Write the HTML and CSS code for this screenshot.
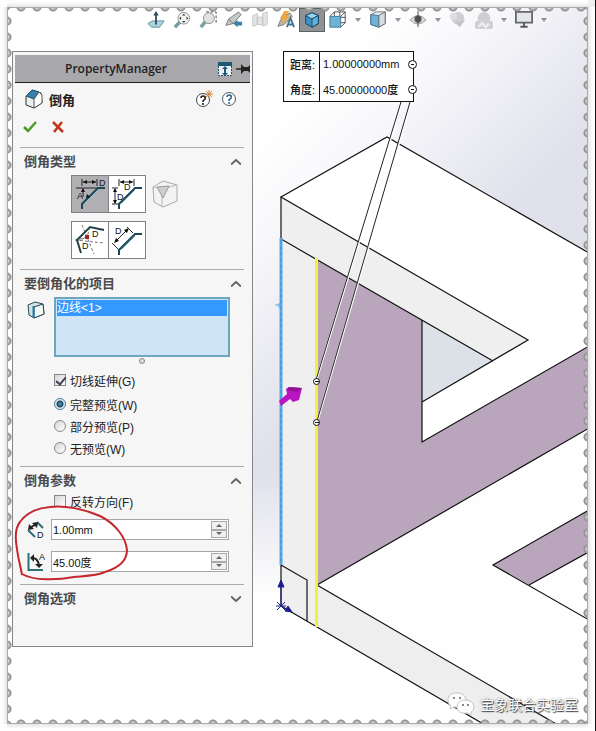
FILE: index.html
```
<!DOCTYPE html>
<html lang="zh-CN">
<head>
    <meta charset="UTF-8">
    <meta name="viewport" content="width=device-width, initial-scale=1">
    <title>倒角 - PropertyManager</title>
    <link rel="stylesheet" href="styles.css">
</head>
<body>
<div class="page">
    <svg class="model" viewBox="0 0 596 731" preserveAspectRatio="xMinYMin slice" aria-hidden="true">
        <!-- faces -->
        <g stroke="none">
            <polygon fill="#fff" points="281,197 387,137 596,257 596,342 422,442 422,402 528,340"/>
            <polygon fill="#fefefe" points="317,585 596,424 596,731 570,731"/>
            <polygon fill="#dce1e8" points="422,320 493,361 422,402"/>
            <polygon fill="#b9a6bc" points="317,259 422,320 422,442 596,342 596,424 317,585"/>
            <polygon fill="#b9a6bc" points="493,565 596,506 596,548 529,585"/>
            <polygon fill="#efeff0" points="281,197 528,340 493,361 317,260 317,627 281,606"/>
            <polygon fill="#eeeeee" points="317,585 570,732 497,732 317,627"/>
        </g>
        <!-- edges -->
        <g fill="none" stroke="#111" stroke-width="1.2">
            <path d="M596 257 387 137 281 197 528 340 422 402"/>
            <path d="M281 197V239L493 361"/>
            <path d="M422 320V442L596 342"/>
            <path d="M596 424 317 585 570 732"/>
            <path d="M281 606 497 732"/>
            <path d="M596 506 493 565 596 624M529 585 596 548"/>
            <path d="M281 606V565L307 580V621"/>
        </g>
        <path d="M281 238V565" stroke="#5aa9e6" stroke-width="3"/>
        <path d="M281 240V565" stroke="#3f93da" stroke-dasharray="4 2"/>
        <path d="M275 305H281M279 303V308" stroke="#5aa9e6"/>
        <path d="M316.500 258V627" stroke="#f6f03c" stroke-width="3"/>
        <!-- leaders from the callout -->
        <g fill="none">
            <path d="M402 102 317 378M411 102 318 419" stroke="#fff" stroke-width="2"/>
            <path d="M401 102 316 380M410 102 317 421" stroke="#222"/>
            <g stroke="#111" fill="#fff">
                <circle cx="316.500" cy="381.500" r="3"/>
                <circle cx="316.500" cy="422.500" r="3"/>
                <path d="M315 381.500H319M315 422.500H319"/>
            </g>
        </g>
        <path d="M279 401 287 394 286 389 289 387 302 388 299 400 293 402 290 399 281 406Z" fill="#b915c0"/>
        <path d="M289 387 302 388 297 392 287 390Z" fill="#8f1296"/>
        <g stroke="#1c1c8c" fill="#1c1c8c">
            <path d="M281 606V586M281 606 288 610" fill="none"/>
            <path d="M281 580 284 587H278ZM292 612 285 611 288 606Z"/>
            <path d="M277 602 285 610M285 602 277 610M276 606H286" fill="none"/>
        </g>
    </svg>

    <nav class="toolbar" aria-label="视图">
        <button class="tool" title="正视于">
            <svg viewBox="0 0 20 20"><path d="M1 14 6 11H19L14 18H5Z" fill="#a9d3de" stroke="#5d8f9d"/><path d="M10 15V4" stroke="#344d58" stroke-width="2"/><path d="M10 0 13 5H7Z" fill="#344d58"/></svg>
        </button>
        <button class="tool" title="整屏显示全图">
            <svg viewBox="0 0 20 20"><path d="M2 18 8 12" stroke="#78a1a6" stroke-width="4"/><circle cx="12" cy="8" r="6.500" fill="#f4f4f2" stroke="#888"/><path d="M12 3 14 5H10ZM12 13 10 11H14ZM7 8 9 6V10ZM17 8 15 10V6Z" fill="#333"/></svg>
        </button>
        <button class="tool" title="局部放大">
            <svg viewBox="0 0 20 20"><path d="M8 1H19V14" fill="none" stroke="#333" stroke-dasharray="3 2"/><path d="M2 18 7 12" stroke="#78a1a6" stroke-width="4"/><circle cx="11" cy="8" r="6" fill="#dfe3e3" stroke="#888"/></svg>
        </button>
        <button class="tool" title="上一视图">
            <svg viewBox="0 0 20 20"><path d="M1 16 4 9 15 1 18 4 9 14Z" fill="#c6c9c9" stroke="#777"/><path d="M4 9 9 14" stroke="#666"/><path d="M9 14 14 10V12H19V16H14V18Z" fill="#3e7fa6"/></svg>
        </button>
        <button class="tool" title="剖面视图" disabled>
            <svg viewBox="0 0 20 20"><path d="M2 5 7 3V15L2 17ZM7 7H13V15H7ZM13 3 18 1V15L13 17Z" fill="#e4e4e4" stroke="#c4c4c4"/></svg>
        </button>
        <button class="tool" title="动态注解视图">
            <svg viewBox="0 0 20 20"><path d="M1 17 4 10 14 2 17 6 8 15Z" fill="#c3b7a3" stroke="#777"/><path d="M8 0 3 9H8L4 15 14 6H9L14 0Z" fill="#f1a63c"/><path d="M11 18 15 8 19 18M12 15H18" fill="none" stroke="#3f7495" stroke-width="2"/></svg>
        </button>
        <button class="tool pressed" title="视图定向">
            <svg viewBox="0 0 20 20"><path d="M10 2 17 5V14L10 18 3 14V5Z" fill="#3c93c6" stroke="#173f5c"/><path d="M10 2 17 5 10 9 3 5Z" fill="#94d3f0" stroke="#173f5c"/><path d="M10 9 17 5V14L10 18Z" fill="#5fb3de" stroke="#173f5c"/></svg>
        </button>
        <button class="tool" title="显示样式">
            <svg viewBox="0 0 20 20"><path d="M6 1H18V13H6ZM1 6 6 1M13 6 18 1M13 18 18 13M12 1V13M6 7H18" fill="none" stroke="#444"/><path d="M1 6H13V18H1Z" fill="#6fb4d6" stroke="#3b7694"/></svg>
        </button>
        <button class="more" aria-label="更多"></button>
        <button class="tool" title="隐藏/显示项目">
            <svg viewBox="0 0 20 20"><path d="M2 4 8 1H18V14L11 18 2 15Z" fill="#eee" stroke="#667"/><path d="M2 4 11 5V18L2 15Z" fill="#6fb4d6" stroke="#44718c"/><path d="M11 5 18 1V14L11 18Z" fill="#d6dde1" stroke="#667"/></svg>
        </button>
        <button class="more" aria-label="更多"></button>
        <button class="tool" title="显示">
            <svg viewBox="0 0 20 20"><path d="M1 10Q10 0 19 10 10 19 1 10Z" fill="#ddd" stroke="#999"/><circle cx="10" cy="9" r="4" fill="#555"/><path d="M10 0V18" stroke="#444"/></svg>
        </button>
        <button class="more" aria-label="更多"></button>
        <button class="tool" title="编辑外观" disabled>
            <svg viewBox="0 0 20 20"><circle cx="10" cy="8" r="7" fill="#d0d0d4"/><circle cx="5" cy="6" r="4" fill="#dedee1"/><path d="M7 13 18 10 12 18Z" fill="#c4c4c8"/></svg>
        </button>
        <button class="tool" title="应用布景" disabled>
            <svg viewBox="0 0 20 20"><path d="M1 12H19V19H1Z" fill="#d6d6da" stroke="#bbb"/><circle cx="10" cy="8" r="7" fill="#cfcfd3"/><path d="M4 18 8 13 12 18 15 14" fill="none" stroke="#f1f1f3" stroke-width="2"/></svg>
        </button>
        <button class="more" aria-label="更多"></button>
        <button class="tool" title="视图设定">
            <svg viewBox="0 0 20 20"><path d="M1 1H19V13H1Z" fill="#e3e6ea" stroke="#666" stroke-width="2"/><path d="M10 13V17M6 17.500H14" stroke="#555" stroke-width="2"/></svg>
        </button>
        <button class="more" aria-label="更多"></button>
    </nav>

    <div class="workspace">
        <form class="panel">
            <header class="panel-bar">
                <h1>PropertyManager</h1>
                <svg width="14" height="14" viewBox="0 0 14 14"><path d="M0 0H14V4H0Z" fill="#1f5877"/><path d="M.5 4V13.500H13.500V4" fill="#e9f1f5" stroke="#1f5877" stroke-dasharray="2 1"/><path d="M7 4 10 7H4ZM7 14 4 11H10ZM6 6H8V12H6Z" fill="#1f5877"/></svg>
                <svg width="14" height="10" viewBox="0 0 14 10"><path d="M0 5H6" stroke="#222" stroke-width="1.500"/><path d="M5 0 8 3H12L14 1V9L12 7H8L5 10Z" fill="#222"/></svg>
            </header>

            <div class="feature">
                <svg width="18" height="20" viewBox="0 0 18 20"><path d="M1 7 7 1 16 4 17 14 9 19 1 16Z" fill="#e9eff1" stroke="#333"/><path d="M1 7 7 1 14 3 9 10Z" fill="#3684ad" stroke="#24546e"/><path d="M9 10 14 3 17 6V14L9 19Z" fill="#fff" stroke="#555"/></svg>
                <h2>倒角</h2>
                <button type="button" class="icon" aria-label="新增功能">
                    <svg width="18" height="18" viewBox="0 0 18 18"><circle cx="8" cy="10" r="6.500" fill="#fff" stroke="#444"/><path d="M6 8Q6 6 8 6 11 6 10 9L8 11V12M8 13V15" fill="none" stroke="#222" stroke-width="1.600"/><path d="M14 0V8M10 4H18M11 1 17 7M17 1 11 7" stroke="#d28538"/></svg>
                </button>
                <button type="button" class="icon" aria-label="帮助">
                    <svg width="18" height="18" viewBox="0 0 18 18"><circle cx="9" cy="9" r="6.500" fill="#fff" stroke="#555"/><path d="M7 7Q7 5 9 5 12 5 11 8L9 10V11M9 12V14" fill="none" stroke="#2a668c" stroke-width="1.600"/></svg>
                </button>
            </div>
            <div class="confirm">
                <button type="submit" class="icon" aria-label="确定">
                    <svg width="14" height="12" viewBox="0 0 14 12"><path d="M1 6 5 10 13 1" fill="none" stroke="#4c9a2a" stroke-width="2.500"/></svg>
                </button>
                <button type="button" class="icon" aria-label="取消">
                    <svg width="12" height="12" viewBox="0 0 12 12"><path d="M1 1 11 11M10 1 2 11" stroke="#c0351d" stroke-width="2.500"/></svg>
                </button>
            </div>

            <section class="group">
                <h3>倒角类型 <svg class="chevron" viewBox="0 0 10 6"><path d="M0 5.500 5 1 10 5.500"/></svg></h3>
                <div class="types">
                    <div class="pair">
                        <button type="button" class="type selected" aria-label="角度距离">
                            <svg viewBox="0 0 36 36"><path d="M4 12H33M10 3V10M25 3V10M11 6H24M11 13V21M10 28 26 12" stroke="#222"/><path d="M10 33V28L26 12H33" fill="none" stroke="#1c4656" stroke-width="2"/><path d="M13 27 26 14" stroke="#8fc8e8"/><path d="M11 6 15 4V8ZM24 6 20 4V8ZM11 12 13 16H9ZM14 22 15 18 18 21Z" fill="#111"/><text x="27" y="10">D</text><text x="5" y="23">A</text></svg>
                        </button>
                        <button type="button" class="type" aria-label="距离距离">
                            <svg viewBox="0 0 36 36"><path d="M10 3V10M25 3V10M11 6H24M3 12H9M3 28H9M6 13V27" stroke="#222"/><path d="M10 33V28L26 12H33" fill="none" stroke="#1c4656" stroke-width="2"/><path d="M13 27 26 14" stroke="#7fbfc0"/><path d="M11 6 15 4V8ZM24 6 20 4V8ZM6 12 8 16H4ZM6 28 4 24H8Z" fill="#111"/><text x="15" y="14">D</text><text x="8" y="24">D</text></svg>
                        </button>
                    </div>
                    <button type="button" class="icon vertex" aria-label="顶点" disabled>
                        <svg width="26" height="28" viewBox="0 0 26 28"><path d="M1 7 11 1 25 5V21L11 27 2 22Z" fill="#f3f3f3" stroke="#aaa"/><path d="M1 7 10 9 25 5M10 9V27" fill="none" stroke="#bbb"/><path d="M5 7 17 6 11 18Z" fill="#cfcfcf" stroke="#999"/></svg>
                    </button>
                </div>
                <div class="types">
                    <div class="pair">
                        <button type="button" class="type" aria-label="等距面">
                            <svg viewBox="0 0 36 36"><path d="M10 3 22 32M3 18 32 21M18 5 15 15 5 18M5 19 15 15" fill="none" stroke="#777" stroke-dasharray="3 2"/><path d="M9 31 5 18 18 5 32 8" fill="none" stroke="#224248" stroke-width="2"/><path d="M13 13H17V17H13Z" fill="#a12622"/><text x="20" y="15">D</text><text x="10" y="27">D</text></svg>
                        </button>
                        <button type="button" class="type" aria-label="面-面">
                            <svg viewBox="0 0 36 36"><path d="M10 33V28L26 12H33" fill="none" stroke="#1c4656" stroke-width="2"/><path d="M13 27 26 14" stroke="#68aeba"/><path d="M3 21 9 27M18 5 24 11M6 20 18 8" stroke="#222"/><path d="M5 21 7 16 10 19ZM20 6 15 8 18 11Z" fill="#111"/><text x="6" y="12">D</text></svg>
                        </button>
                    </div>
                </div>
            </section>

            <section class="group items">
                <h3>要倒角化的项目 <svg class="chevron" viewBox="0 0 10 6"><path d="M0 5.500 5 1 10 5.500"/></svg></h3>
                <div class="picker">
                    <svg width="18" height="18" viewBox="0 0 18 18"><path d="M1 4 8 1 16 3 17 13 7 17 2 14Z" fill="#cfe3e8" stroke="#2b4650"/><path d="M7 6 16 3 17 13 7 17Z" fill="#f2f7f8" stroke="#2b4650"/><path d="M6.500 5V17" stroke="#2277a8" stroke-width="2"/></svg>
                    <ul class="selection">
                        <li>边线&lt;1&gt;</li>
                    </ul>
                </div>
                <div class="grip"></div>
                <div class="options">
                    <label class="option tangent"><input type="checkbox" checked> 切线延伸(G)</label>
                    <label class="option"><input type="radio" name="preview" checked> 完整预览(W)</label>
                    <label class="option"><input type="radio" name="preview"> 部分预览(P)</label>
                    <label class="option"><input type="radio" name="preview"> 无预览(W)</label>
                </div>
            </section>

            <section class="group params">
                <h3>倒角参数 <svg class="chevron" viewBox="0 0 10 6"><path d="M0 5.500 5 1 10 5.500"/></svg></h3>
                <div class="options">
                    <label class="option"><input type="checkbox"> 反转方向(F)</label>
                </div>
                <div class="field">
                    <label for="distance" title="距离">
                        <svg width="18" height="18" viewBox="0 0 18 18"><path d="M1 9 8 16M10 1 16 7" stroke="#2d7076" stroke-width="2"/><path d="M3 7 9 3" stroke="#222" stroke-width="2"/><path d="M1 9 2 3 7 8ZM11 1 10 7 5 2Z" fill="#222"/><text x="10" y="17">D</text></svg>
                    </label>
                    <div class="spin">
                        <input id="distance" type="text" value="1.00mm">
                        <div class="steps">
                            <button type="button" class="up" aria-label="增加"></button>
                            <button type="button" class="down" aria-label="减少"></button>
                        </div>
                    </div>
                </div>
                <div class="field">
                    <label for="angle" title="角度">
                        <svg width="18" height="18" viewBox="0 0 18 18"><path d="M1.500 0V17H16" fill="none" stroke="#2d7076" stroke-width="2"/><path d="M4 5Q11 4 12 13" fill="none" stroke="#222" stroke-width="2"/><path d="M3 5 7 1V9ZM12 15 8 11H16Z" fill="#222"/><text x="12" y="7">A</text></svg>
                    </label>
                    <div class="spin">
                        <input id="angle" type="text" value="45.00度">
                        <div class="steps">
                            <button type="button" class="up" aria-label="增加"></button>
                            <button type="button" class="down" aria-label="减少"></button>
                        </div>
                    </div>
                </div>
                <svg class="marker" width="116" height="80" viewBox="0 0 116 80" aria-hidden="true"><path d="M8 71C7 64 4 54 3 45 1 34 1 24 6 18 13 8 24 4 36 3 50 1 70 5 86 12 102 20 112 34 113 46 113 58 104 64 91 68 82 72 70 72 60 73 44 76 20 77 8 70"/></svg>
            </section>

            <section class="group">
                <h3>倒角选项 <svg class="chevron" viewBox="0 0 10 6"><path d="M0 .5 5 5 10 .5"/></svg></h3>
            </section>
        </form>

        <table class="callout">
            <tr><th scope="row">距离:</th><td>1.00000000mm</td></tr>
            <tr><th scope="row">角度:</th><td>45.00000000度</td></tr>
        </table>
    </div>

    <div class="watermark">
        <svg width="28" height="24" viewBox="0 0 28 24"><g fill="#fff" stroke="#c4c4c4"><path d="M10 1C4 1 1 4 1 8Q1 12 4 14L3 17 7 15Q12 16 15 14 19 12 19 8 18 1 10 1Z"/><path d="M18 8C13 8 10 11 10 15 10 20 15 22 21 21L24 23V20Q27 18 27 15 26 8 18 8Z"/></g><path d="M6 6H8M12 6H14M15 13H17M20 13H22" stroke="#888" stroke-width="2"/></svg>
        <span>宝象联合实验室</span>
    </div>

    <div class="edge top"></div>
    <div class="edge bottom"></div>
    <div class="edge left"></div>
    <div class="edge right"></div>
</div>
</body>
</html>
```
FILE: styles.css
```
* {
    box-sizing: border-box;
}

body {
    background: #fff;
    color: #222;
    font-family: "Liberation Sans", "Noto Sans CJK SC", sans-serif;
    font-size: 12px;
    margin: 0;
}

h1,
h2,
h3,
ul {
    margin: 0;
    padding: 0;
}

button {
    background: none;
    border: 0;
    padding: 0;
}

svg {
    display: block;
    flex: none;
}

svg text {
    fill: #111;
    font-size: 9px;
}

.page {
    background:
        linear-gradient(to bottom, transparent 65%, #fff 82%),
        linear-gradient(135deg, #fff 30%, #f8f8fb 38%, #e0e1eb 54%, #dcdfe8 100%);
    border-right: 1px solid #111;
    min-height: 100vh;
    overflow: hidden;
    padding: 8px 8px 84px 12px;
    position: relative;
}

.model {
    height: 100%;
    left: 0;
    position: absolute;
    top: 0;
    width: 100%;
}

/* view toolbar */
.toolbar {
    display: flex;
    height: 24px;
    padding-left: 131px;
    position: relative;
}

.tool {
    align-items: center;
    display: flex;
    height: 24px;
    justify-content: center;
    width: 26px;
}

.tool svg {
    height: 18px;
    width: 18px;
}

.tool.pressed {
    background: #8f9395;
    border: 1px solid #5d6265;
}

.more {
    display: flex;
    justify-content: center;
    padding-top: 10px;
    width: 14px;
}

.more::after {
    border: 3px solid transparent;
    border-top: 4px solid #92929a;
    content: "";
}

.workspace {
    align-items: flex-start;
    display: flex;
    padding-top: 19px;
    position: relative;
}

/* property manager */
.panel {
    background: #f6f6f7;
    border: 1px solid #85858a;
    flex: none;
    padding: 3px 2px 34px;
    width: 241px;
}

.panel-bar {
    align-items: center;
    background: #a8a8ab;
    border-bottom: 1px solid #222;
    display: flex;
    gap: 4px;
    height: 28px;
}

.panel-bar h1 {
    flex: 1;
    font-family: "Open Sans", sans-serif;
    font-size: 12px;
    font-weight: 600;
    padding-left: 50px;
}

.feature {
    align-items: center;
    display: flex;
    gap: 6px;
    height: 32px;
    padding: 0 12px 0 10px;
}

.feature h2 {
    flex: 1;
    font-size: 13px;
}

.feature .icon + .icon {
    margin-left: 1px;
}

.confirm {
    align-items: center;
    display: flex;
    gap: 15px;
    height: 24px;
    margin-bottom: 8px;
    padding-left: 8px;
}

.group {
    border-top: 1px solid #aaaaad;
    margin: 0 6px 0 5px;
    position: relative;
}

.group h3 {
    align-items: center;
    color: #4a4a4d;
    display: flex;
    font-size: 13px;
    height: 27px;
    justify-content: space-between;
    line-height: 27px;
    padding: 0 3px 0 4px;
}

.chevron {
    fill: none;
    height: 6px;
    stroke: #666;
    stroke-width: 2;
    width: 10px;
}

.types {
    align-items: center;
    display: flex;
    gap: 6px;
    margin-bottom: 8px;
    padding-left: 51px;
}

.types:last-child {
    margin-bottom: 10px;
}

.pair {
    display: flex;
}

.type {
    background: #fff;
    border: 1px solid #808084;
    height: 38px;
    width: 38px;
}

.type + .type {
    margin-left: -1px;
}

.type.selected {
    background: #b0b0b3;
}

.items {
    padding-bottom: 7px;
}

.picker {
    display: flex;
    gap: 9px;
    padding: 0 14px 0 7px;
}

.picker svg {
    margin-top: 4px;
}

.selection {
    background: #cfe4f5;
    border: 2px solid #6fa6bd;
    flex: 1;
    height: 60px;
    list-style: none;
    padding: 1px;
}

.selection li {
    background: #3399ff;
    color: #fff;
    height: 16px;
    line-height: 16px;
}

.grip {
    background: #ddd;
    border: 1px solid #888;
    border-radius: 50%;
    height: 6px;
    margin: 1px 0 5px 119px;
    width: 6px;
}

.options {
    padding-left: 34px;
}

.option {
    align-items: center;
    display: flex;
    gap: 4px;
    height: 22px;
}

.option.tangent {
    margin-bottom: 2px;
}

.option input {
    appearance: none;
    background: linear-gradient(135deg, #d5d5d7, #fff);
    border: 1px solid #8a8a8e;
    height: 12px;
    margin: 0;
    width: 12px;
}

.option input[type="checkbox"]:checked::after {
    border: solid #445;
    border-width: 0 2px 2px 0;
    content: "";
    display: block;
    height: 8px;
    margin-left: 3px;
    transform: rotate(40deg);
    width: 4px;
}

.option input[type="radio"] {
    border-radius: 50%;
}

.option input[type="radio"]:checked {
    background: radial-gradient(circle, #5fa4c8 0, #16435f 3px, #e8f1f6 4px);
    border-color: #4c7690;
}

.params {
    padding-bottom: 12px;
}

.params .options {
    margin-bottom: 7px;
    margin-top: -4px;
}

.field {
    align-items: center;
    display: flex;
    gap: 6px;
    padding: 0 15px 0 7px;
}

.field + .field {
    margin-top: 11px;
}

.spin {
    background: #fff;
    border: 1px solid #a6a6aa;
    display: flex;
    flex: 1;
    height: 21px;
    padding: 1px;
}

.spin input {
    background: none;
    border: 0;
    color: #111;
    flex: 1;
    font: inherit;
    font-size: 11px;
    min-width: 0;
    outline: 0;
    padding: 0;
}

.steps {
    display: flex;
    flex-direction: column;
    width: 16px;
}

.steps button {
    align-items: center;
    background: #f0f0f1;
    border: 1px solid #aaa;
    display: flex;
    flex: 1;
    justify-content: center;
}

.steps button::after {
    border: 3px solid transparent;
    content: "";
}

.steps .up::after {
    border-bottom-color: #666;
    border-top: 0;
}

.steps .down::after {
    border-bottom: 0;
    border-top-color: #666;
}

/* hand-drawn ring round the two values */
.marker {
    fill: none;
    left: -6px;
    pointer-events: none;
    position: absolute;
    stroke: #c5272d;
    stroke-width: 2;
    top: 37px;
}

/* dimension callout */
.callout {
    background: #fff;
    border: 1px solid #111;
    border-collapse: collapse;
    color: #111;
    font-size: 11px;
    margin-left: 30px;
    position: relative;
    width: 131px;
}

.callout th,
.callout td {
    font-weight: 500;
    height: 25px;
    padding: 0 0 0 3px;
    position: relative;
    text-align: left;
    white-space: nowrap;
}

.callout th {
    border-right: 1px solid #111;
    padding-left: 6px;
    width: 36px;
}

.callout td::after {
    background: linear-gradient(#111, #111) center / 3px 1px no-repeat #fff;
    border: 1px solid #111;
    border-radius: 50%;
    content: "";
    height: 7px;
    position: absolute;
    right: -4px;
    top: 8px;
    width: 7px;
}

.watermark {
    align-items: center;
    bottom: 15px;
    color: #fff;
    display: flex;
    font-size: 14px;
    gap: 5px;
    position: absolute;
    right: 17px;
    text-shadow: 1px 1px 1px #444, 0 0 2px #777;
}

/* perforated stamp border */
.edge {
    pointer-events: none;
    position: absolute;
}

.top,
.bottom {
    height: 14px;
    left: 7px;
    right: 7px;
}

.left,
.right {
    bottom: 7px;
    top: 7px;
    width: 14px;
}

.top {
    background:
        linear-gradient(#fff 2px, #e6e6e6 7px, #aaa 7px, #aaa 8px, transparent 8px),
        radial-gradient(circle at 5px 7px, #ddd 1px, #8c8c8c 4px, transparent 5px) 9px 0 / 16px 14px;
    top: 0;
}

.bottom {
    background:
        linear-gradient(to top, #fff 2px, #e6e6e6 7px, #aaa 7px, #aaa 8px, transparent 8px),
        radial-gradient(circle at 5px 7px, #ddd 1px, #8c8c8c 4px, transparent 5px) 9px 0 / 16px 14px;
    bottom: 0;
}

.left {
    background:
        linear-gradient(to right, #fff 2px, #e6e6e6 7px, #aaa 7px, #aaa 8px, transparent 8px),
        radial-gradient(circle at 7px 5px, #ddd 1px, #8c8c8c 4px, transparent 5px) 0 9px / 14px 16px;
    left: 0;
}

.right {
    background:
        linear-gradient(to left, #fff 2px, #e6e6e6 7px, #aaa 7px, #aaa 8px, transparent 8px),
        radial-gradient(circle at 7px 5px, #ddd 1px, #8c8c8c 4px, transparent 5px) 0 9px / 14px 16px;
    right: 0;
}
```
